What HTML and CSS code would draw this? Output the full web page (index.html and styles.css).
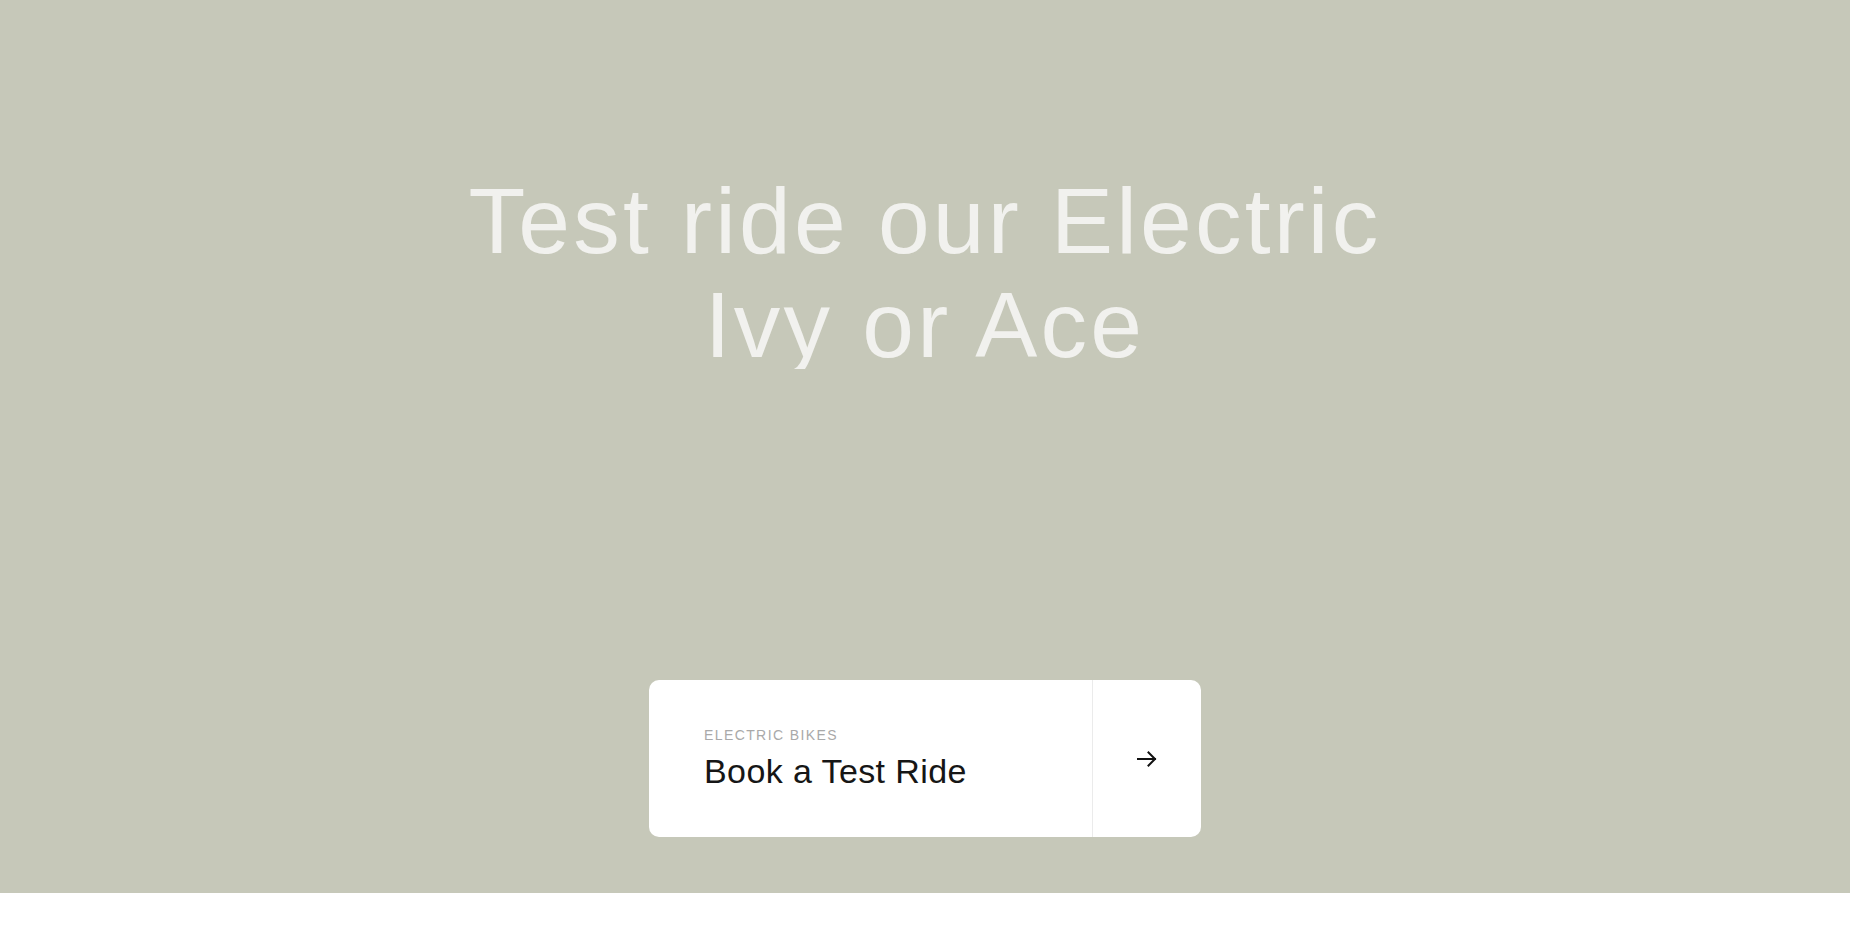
FILE: index.html
```html
<!DOCTYPE html>
<html lang="en">
<head>
<meta charset="utf-8">
<title>Test ride our Electric Ivy or Ace</title>
<link rel="stylesheet" href="styles.css">
</head>
<body>
<section class="hero">
  <h1 class="hero-title">
    <span class="line">Test ride our Electric</span>
    <span class="line line-clip">Ivy or Ace</span>
  </h1>
  <a class="cta-card" href="#">
    <div class="cta-text">
      <span class="cta-label">ELECTRIC BIKES</span>
      <span class="cta-title">Book a Test Ride</span>
    </div>
    <div class="cta-arrow">
      <svg width="20" height="16" viewBox="0 0 20 16" fill="none" stroke="#111" stroke-width="2" stroke-linecap="square">
        <path d="M1 8H18"/>
        <path d="M11.5 1.5L18 8L11.5 14.5"/>
      </svg>
    </div>
  </a>
</section>
<div class="below"></div>
</body>
</html>
```

FILE: styles.css
```css
html, body {
  margin: 0;
  padding: 0;
  background: #ffffff;
}

body {
  font-family: "Liberation Sans", Arial, sans-serif;
}

.hero {
  height: 893px;
  box-sizing: border-box;
  background: #c6c8b9;
  display: flex;
  flex-direction: column;
  align-items: center;
  justify-content: space-between;
  padding: 169px 0 56px;
}

.hero-title {
  margin: 0;
  font-weight: 400;
  font-size: 93px;
  letter-spacing: 3.2px;
  color: #f1f1ee;
  text-align: center;
  display: flex;
  flex-direction: column;
  gap: 8px;
}

.line {
  display: block;
  height: 96px;
  line-height: 104px;
}

.line-clip {
  overflow: hidden;
}

.cta-card {
  display: flex;
  width: 552px;
  height: 157px;
  background: #ffffff;
  border-radius: 10px;
  text-decoration: none;
  overflow: hidden;
}

.cta-text {
  flex: 1;
  display: flex;
  flex-direction: column;
  justify-content: center;
  gap: 8px;
  padding: 0 0 0 55px;
}

.cta-label {
  font-size: 14px;
  line-height: 16px;
  letter-spacing: 1.4px;
  color: #a9a9a9;
}

.cta-title {
  font-size: 34px;
  line-height: 40px;
  letter-spacing: 0.4px;
  color: #161616;
}

.cta-arrow {
  width: 108px;
  border-left: 1px solid #ebebeb;
  display: flex;
  align-items: center;
  justify-content: center;
}

.below {
  height: 53px;
}
```
